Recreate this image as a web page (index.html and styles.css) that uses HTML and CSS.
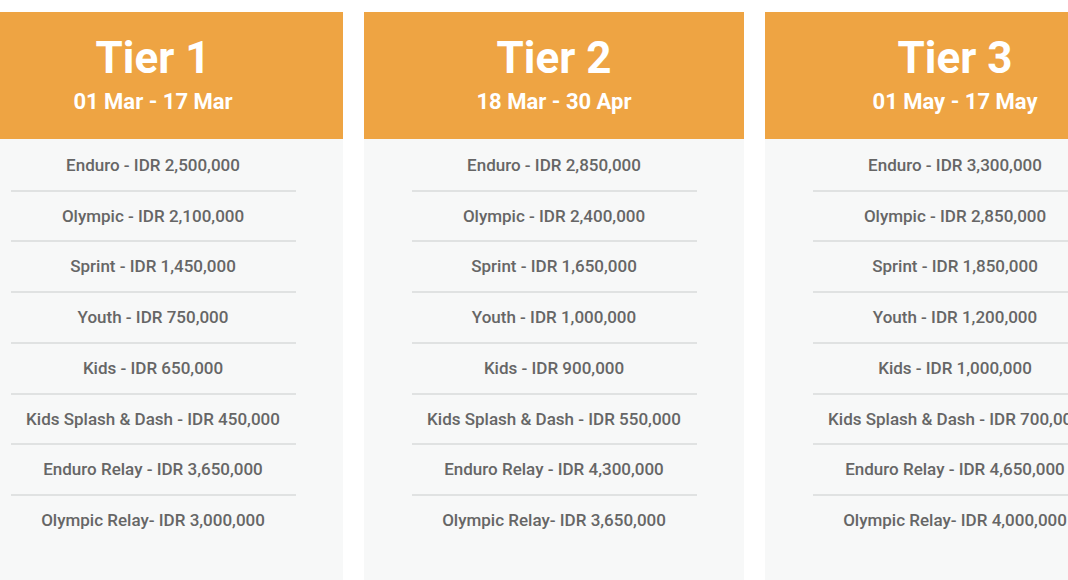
FILE: index.html
```html
<!DOCTYPE html>
<html>
<head>
<meta charset="utf-8">
<link rel="stylesheet" href="styles.css">
</head>
<body>
<div class="tiers">
  <section class="card">
    <header class="card-head">
      <h2 class="tier-title">Tier 1</h2>
      <p class="tier-dates">01 Mar - 17 Mar</p>
    </header>
    <ul class="prices">
      <li>Enduro - IDR 2,500,000</li>
      <li>Olympic - IDR 2,100,000</li>
      <li>Sprint - IDR 1,450,000</li>
      <li>Youth - IDR 750,000</li>
      <li>Kids - IDR 650,000</li>
      <li>Kids Splash &amp; Dash - IDR 450,000</li>
      <li>Enduro Relay - IDR 3,650,000</li>
      <li>Olympic Relay- IDR 3,000,000</li>
    </ul>
  </section>
  <section class="card">
    <header class="card-head">
      <h2 class="tier-title">Tier 2</h2>
      <p class="tier-dates">18 Mar - 30 Apr</p>
    </header>
    <ul class="prices">
      <li>Enduro - IDR 2,850,000</li>
      <li>Olympic - IDR 2,400,000</li>
      <li>Sprint - IDR 1,650,000</li>
      <li>Youth - IDR 1,000,000</li>
      <li>Kids - IDR 900,000</li>
      <li>Kids Splash &amp; Dash - IDR 550,000</li>
      <li>Enduro Relay - IDR 4,300,000</li>
      <li>Olympic Relay- IDR 3,650,000</li>
    </ul>
  </section>
  <section class="card">
    <header class="card-head">
      <h2 class="tier-title">Tier 3</h2>
      <p class="tier-dates">01 May - 17 May</p>
    </header>
    <ul class="prices">
      <li>Enduro - IDR 3,300,000</li>
      <li>Olympic - IDR 2,850,000</li>
      <li>Sprint - IDR 1,850,000</li>
      <li>Youth - IDR 1,200,000</li>
      <li>Kids - IDR 1,000,000</li>
      <li>Kids Splash &amp; Dash - IDR 700,000</li>
      <li>Enduro Relay - IDR 4,650,000</li>
      <li>Olympic Relay- IDR 4,000,000</li>
    </ul>
  </section>
</div>
</body>
</html>
```

FILE: styles.css
```css
html, body {
  margin: 0;
  padding: 0;
  background: #ffffff;
  overflow: hidden;
}
body {
  font-family: Roboto, "Liberation Sans", sans-serif;
  width: 1068px;
  height: 580px;
}
.tiers {
  display: flex;
  gap: 21px;
  margin-left: -37px;
  padding-top: 11.5px;
}
.card {
  flex: 0 0 380px;
  width: 380px;
  background: #f7f8f8;
  min-height: 640px;
}
.card-head {
  background: #eea443;
  color: #ffffff;
  text-align: center;
  padding: 20px 0 23.8px;
}
.tier-title {
  margin: 0;
  font-size: 44px;
  font-weight: 700;
  line-height: 53px;
}
.tier-dates {
  margin: 4.7px 0 0;
  font-size: 22px;
  font-weight: 700;
  line-height: 26px;
}
.prices {
  list-style: none;
  margin: 0 auto;
  padding: 2px 0 0;
  width: 285px;
}
.prices li {
  text-align: center;
  white-space: nowrap;
  font-size: 17px;
  font-weight: 500;
  color: #666666;
  line-height: 18.7px;
  padding: 15px 0;
  border-bottom: 2px solid #e0e2e2;
}
.prices li:last-child {
  border-bottom: none;
}
```
